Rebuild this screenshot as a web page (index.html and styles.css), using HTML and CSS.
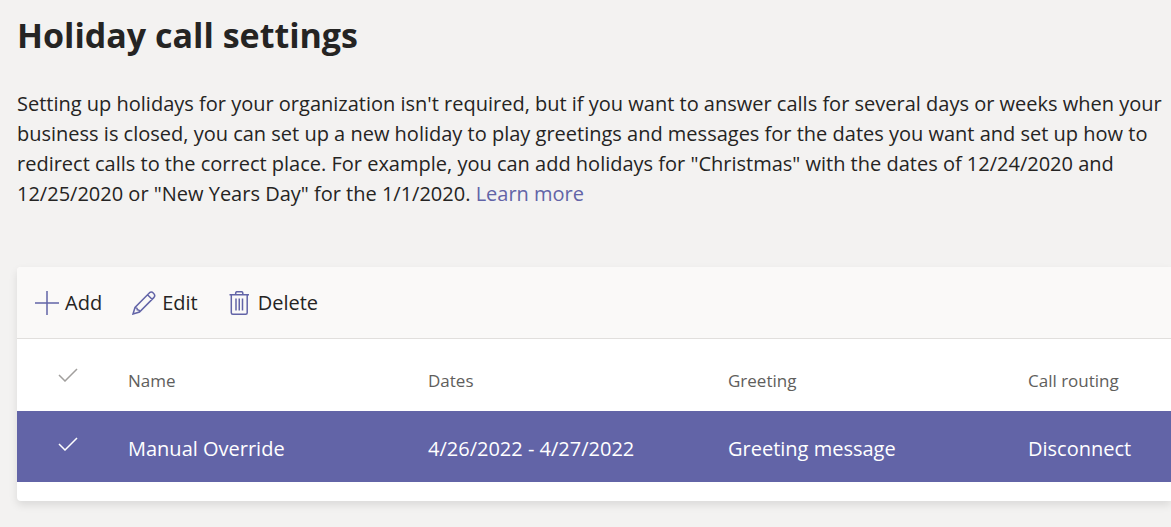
FILE: index.html
```html
<!DOCTYPE html>
<html lang="en">
<head>
<meta charset="utf-8">
<meta name="viewport" content="width=device-width, initial-scale=1">
<title>Holiday call settings</title>
<link rel="stylesheet" href="styles.css">
</head>
<body>
<main class="page">
  <h1 class="title">Holiday call settings</h1>
  <p class="intro">Setting up holidays for your organization isn't required, but if you want to answer calls for several days or weeks when your business is closed, you can set up a new holiday to play greetings and messages for the dates you want and set up how to redirect calls to the correct place. For example, you can add holidays for "Christmas" with the dates of 12/24/2020 and 12/25/2020 or "New Years Day" for the 1/1/2020. <a class="link" href="#">Learn more</a></p>
  <section class="card">
    <div class="toolbar">
      <button class="tool" type="button"><svg class="icon" viewBox="0 0 24 24"><path d="M12 0v24M0 12h24"/></svg>Add</button>
      <button class="tool" type="button"><svg class="icon" viewBox="0 0 24 24"><path d="M1 23l2-6.500L17.500 1.700q2-1.500 4 .500q2.200 2 .500 4.200L7.500 21zM15.500 3.700l4.800 4.800M3 16.500q2.300-.200 2.300 2.200Q7.700 18.700 7.500 21"/></svg>Edit</button>
      <button class="tool" type="button"><svg class="icon" viewBox="0 0 24 24"><path d="M1.500 3.700h19.500M7.700 3.700V2q0-1.300 1.300-1.300h4.500q1.300 0 1.300 1.300v1.700M3.300 3.700V21.700q0 1.500 1.500 1.500h12.900q1.500 0 1.500-1.500V3.700M8 7.500v12M11.250 7.500v12M14.500 7.500v12"/></svg>Delete</button>
    </div>
    <div class="grid">
      <table class="table">
        <thead>
          <tr><th class="mark"><svg class="check" viewBox="0 0 20 14" role="img" aria-label="Select all"><path d="M1 7l6 6L19 1"/></svg></th><th>Name</th><th>Dates</th><th>Greeting</th><th>Call routing</th></tr>
        </thead>
        <tbody>
          <tr><td class="mark"><svg class="check" viewBox="0 0 20 14" role="img" aria-label="Selected"><path d="M1 7l6 6L19 1"/></svg></td><td>Manual Override</td><td>4/26/2022 - 4/27/2022</td><td>Greeting message</td><td>Disconnect</td></tr>
        </tbody>
      </table>
    </div>
  </section>
</main>
</body>
</html>
```
FILE: styles.css
```css
body { margin: 0; background: #f3f2f1; color: #252423; font-family: "Segoe UI", "Open Sans", "Noto Sans", sans-serif; font-size: 20px; }
.page { padding: 11px 0 24px 17px; overflow: hidden; }
.title { margin: 0; font-size: 34px; line-height: 48px; font-weight: 700; }
.intro { margin: 30px 4px 58px 0; line-height: 30px; }
.link { color: #6264a7; text-decoration: none; }
.card { background: #fff; border-radius: 4px 0 0 4px; padding-bottom: 19px; box-shadow: 0 4px 8px rgba(0, 0, 0, .1); }
.toolbar { display: flex; gap: 30px; padding: 18px; background: #faf9f8; border-bottom: 1px solid #e1dfdd; border-radius: 4px 0 0; }
.tool { display: flex; align-items: center; gap: 6px; height: 35px; padding: 0; border: 0; background: none; color: inherit; font: inherit; }
.icon { width: 24px; height: 24px; fill: none; stroke: #6264a7; stroke-width: 1.5; }
.grid { overflow: hidden; }
.table { width: 100%; min-width: 1311px; border-collapse: collapse; table-layout: fixed; text-align: left; }
.table th, .table td { box-sizing: border-box; height: 71px; padding: 0; font-weight: 400; white-space: nowrap; }
.table th { height: 72px; padding-top: 10px; color: #605e5c; font-size: 17px; }
.table td { background: #6264a7; color: #fff; padding-top: 4px; }
.table .mark { width: 111px; padding: 0 0 5px; }
.table th.mark { padding-bottom: 0; color: #a19f9d; }
.check { display: block; width: 20px; height: 14px; margin-left: 41px; fill: none; stroke: currentColor; stroke-width: 1.5; }
```
